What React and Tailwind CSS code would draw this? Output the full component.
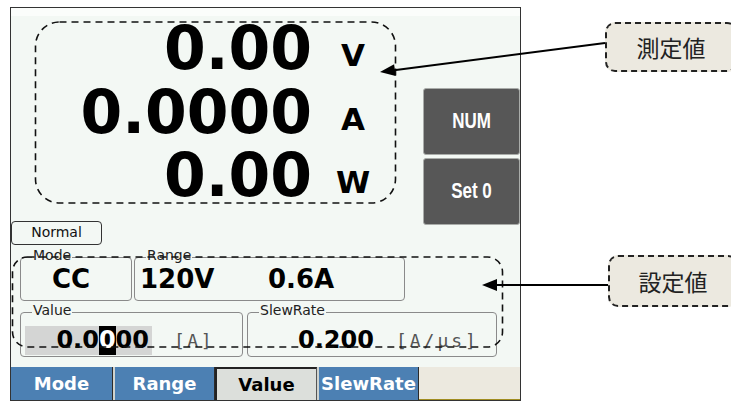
import React from "react";

const BG = "bg-[#f3f8f4]";

function Legend({ children }) {
  return (
    <span className={`absolute left-[11px] top-[-11px] px-[1px] ${BG} text-[14px] leading-[16px] text-[#222]`}>
      {children}
    </span>
  );
}

function Tab({ label, active, first }) {
  if (active) {
    return (
      <div className="w-[102px] h-full flex items-center justify-center bg-[#dcdfdb] border-t-2 border-l-2 border-[#222] border-r border-r-[#555] text-black text-[18px] font-bold">
        {label}
      </div>
    );
  }
  return (
    <div
      className={`w-[102px] h-full flex items-center justify-center bg-[#4c80b3] text-white text-[18px] font-bold border-r border-r-[#2b2b2b] ${
        first ? "" : "border-l-2 border-l-[#cfd3cf]"
      }`}
    >
      {label}
    </div>
  );
}

export default function App() {
  return (
    <div
      className="relative w-[731px] h-[401px] overflow-hidden bg-white"
      style={{ fontFamily: '"DejaVu Sans", sans-serif' }}
    >
      {/* Device screen */}
      <div className="ml-[10px] mt-[7px] w-[511px] h-[394px] border border-[#333] bg-[linear-gradient(#fbfdfb_8px,#f3f8f4_8px)] flex flex-col">
        {/* Upper area */}
        <div className="flex">
          <div className="flex flex-col">
            <div className="pt-[9px] flex flex-col">
              {[
                ["0.00", "V"],
                ["0.0000", "A"],
                ["0.00", "W"],
              ].map(([v, u]) => (
                <div key={u} className="flex items-baseline">
                  <span className="w-[301px] text-right text-[60px] leading-[63.5px] font-bold text-black">
                    {v}
                  </span>
                  <span className="ml-[21px] w-[40px] text-center text-[31px] leading-none font-bold text-black -translate-y-[3px]">
                    {u}
                  </span>
                </div>
              ))}
            </div>
            <div className="mt-[13px] w-[91px] h-[24px] border border-[#333] rounded-[4px] flex items-center justify-center text-[14px] text-[#111]">
              Normal
            </div>
          </div>
          <div className="ml-auto pt-[80px] flex flex-col gap-[3px]">
            {["NUM", "Set 0"].map((t) => (
              <div
                key={t}
                className="w-[97px] h-[67px] rounded-[3px] border border-[#a9aca9] bg-[#575757] flex items-center justify-center text-white text-[17px] font-bold"
                style={{ fontFamily: '"Liberation Sans", sans-serif' }}
              >
                <span className="scale-y-[1.25]">{t}</span>
              </div>
            ))}
          </div>
        </div>

        {/* Settings */}
        <div className="mt-[12px] pl-[9px] flex flex-col gap-[11px]">
          <div className="flex gap-[2px]">
            <div className="relative w-[112px] h-[44px] border border-[#8a8a8a] rounded-[4px] flex items-center pl-[31px]">
              <Legend>Mode</Legend>
              <span className="text-[26px] font-bold leading-none text-black">CC</span>
            </div>
            <div className="relative w-[271px] h-[44px] border border-[#8a8a8a] rounded-[4px] flex items-center pl-[5px]">
              <Legend>Range</Legend>
              <span className="w-[128px] text-[26px] font-bold leading-none text-black">120V</span>
              <span className="text-[26px] font-bold leading-none text-black">0.6A</span>
            </div>
          </div>
          <div className="flex gap-[4px]">
            <div className="relative w-[223px] h-[45px] border border-[#8a8a8a] rounded-[4px] pt-[13px] pl-[4px] flex items-start">
              <Legend>Value</Legend>
              <div className="w-[127px] h-[29px] bg-[#d4d5d4] flex justify-end pr-[3px] text-[24px] leading-[29px] font-bold text-black">
                <span>0.0</span>
                <span className="bg-black text-white">0</span>
                <span>00</span>
              </div>
              <span
                className="ml-[22px] text-[18px] leading-[29px] tracking-[2.5px] text-[#555]"
                style={{ fontFamily: '"DejaVu Sans Mono", monospace' }}
              >
                [A]
              </span>
            </div>
            <div className="relative w-[250px] h-[45px] border border-[#8a8a8a] rounded-[4px] pt-[13px] pl-[50px] flex items-start">
              <Legend>SlewRate</Legend>
              <span className="text-[24px] leading-[29px] font-bold text-black">0.200</span>
              <span
                className="ml-[22px] text-[18px] leading-[29px] tracking-[3px] text-[#555]"
                style={{ fontFamily: '"DejaVu Sans Mono", monospace' }}
              >
                [A/μs]
              </span>
            </div>
          </div>
        </div>

        {/* Tabs */}
        <div className="mt-auto h-[33px] flex">
          <Tab label="Mode" first />
          <Tab label="Range" />
          <Tab label="Value" active />
          <Tab label="SlewRate" />
          <div className="flex-1 h-full bg-[#ece9df] border-b border-[#a08c20]" />
        </div>
      </div>

      {/* Callouts */}
      <div
        className="absolute left-[605px] top-[22px] w-[132px] h-[50px] rounded-[10px] border-2 border-dashed border-[#222] bg-[#ece9e0] flex items-center justify-center text-[23px] text-[#222]"
        style={{ fontFamily: '"Noto Sans CJK JP", sans-serif' }}
      >
        測定値
      </div>
      <div
        className="absolute left-[608px] top-[255px] w-[130px] h-[52px] rounded-[10px] border-2 border-dashed border-[#222] bg-[#ece9e0] flex items-center justify-center text-[23px] text-[#222]"
        style={{ fontFamily: '"Noto Sans CJK JP", sans-serif' }}
      >
        設定値
      </div>

      {/* Annotation drawing */}
      <svg className="absolute inset-0 pointer-events-none" width="731" height="401" viewBox="0 0 731 401">
        <rect x="35.5" y="22" width="360" height="181" rx="24" fill="none" stroke="#111" strokeWidth="1.6" strokeDasharray="7 5" />
        <rect x="12.5" y="257" width="490" height="90" rx="15" fill="none" stroke="#111" strokeWidth="1.6" strokeDasharray="7 5" />
        <line x1="605" y1="43" x2="394" y2="70.2" stroke="#000" strokeWidth="2" />
        <polygon points="380,72 395.7,76.1 394.1,64.2" fill="#000" />
        <line x1="608" y1="285" x2="495" y2="285" stroke="#000" strokeWidth="2.2" />
        <polygon points="482,285 497,279 497,291" fill="#000" />
      </svg>
    </div>
  );
}
